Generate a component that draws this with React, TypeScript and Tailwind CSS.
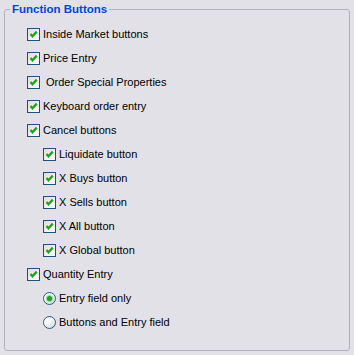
import React from "react";

type Item = {
  label: string;
  kind: "check" | "radio";
  indent?: boolean;
  on: boolean;
  pad?: boolean;
};

const items: Item[] = [
  { label: "Inside Market buttons", kind: "check", on: true },
  { label: "Price Entry", kind: "check", on: true },
  { label: "Order Special Properties", kind: "check", on: true, pad: true },
  { label: "Keyboard order entry", kind: "check", on: true },
  { label: "Cancel buttons", kind: "check", on: true },
  { label: "Liquidate button", kind: "check", on: true, indent: true },
  { label: "X Buys button", kind: "check", on: true, indent: true },
  { label: "X Sells button", kind: "check", on: true, indent: true },
  { label: "X All button", kind: "check", on: true, indent: true },
  { label: "X Global button", kind: "check", on: true, indent: true },
  { label: "Quantity Entry", kind: "check", on: true },
  { label: "Entry field only", kind: "radio", on: true, indent: true },
  { label: "Buttons and Entry field", kind: "radio", on: false, indent: true },
];

function CheckBox({ on }: { on: boolean }) {
  return (
    <span className="flex h-[13px] w-[13px] shrink-0 items-center justify-center border border-[#1c5180] bg-gradient-to-br from-[#dcdcd7] to-[#ffffff]">
      {on && (
        <svg width="11" height="11" viewBox="0 0 11 11">
          <path
            d="M2.5 5 L4.5 7.2 L8.8 2.6"
            fill="none"
            stroke="#21a121"
            strokeWidth="2.3"
          />
        </svg>
      )}
    </span>
  );
}

function Radio({ on }: { on: boolean }) {
  return (
    <span className="flex h-[13px] w-[13px] shrink-0 items-center justify-center rounded-full border border-[#2a5a8a] bg-gradient-to-br from-[#ffffff] via-[#f4f4f2] to-[#cfcfcb]">
      {on && (
        <span className="h-[5px] w-[5px] rounded-full bg-[#21a121] shadow-[0_0_1px_1px_#8ad88a]" />
      )}
    </span>
  );
}

export default function App() {
  return (
    <div
      className="h-[355px] w-[354px] bg-[#e2e1e7] pt-[2px] pl-[4px] text-[11px] text-black"
      style={{ fontFamily: '"Liberation Sans", Arial, sans-serif' }}
    >
      <fieldset className="h-[349px] w-[346px] rounded-[3px] border border-[#b3b0bd] pt-[6px] pl-[22px]">
        <legend className="-ml-[17px] px-[2px] text-[11.5px] leading-[14px] font-bold text-[#0046d5]">
          Function Buttons
        </legend>
        <div className="flex flex-col">
          {items.map((it) => (
            <div
              key={it.label}
              className={`flex h-[24px] items-center ${it.indent ? "pl-[16px]" : ""}`}
            >
              {it.kind === "check" ? <CheckBox on={it.on} /> : <Radio on={it.on} />}
              <span className={it.pad ? "ml-[6px]" : "ml-[3px]"}>
                {it.label}
              </span>
            </div>
          ))}
        </div>
      </fieldset>
    </div>
  );
}
